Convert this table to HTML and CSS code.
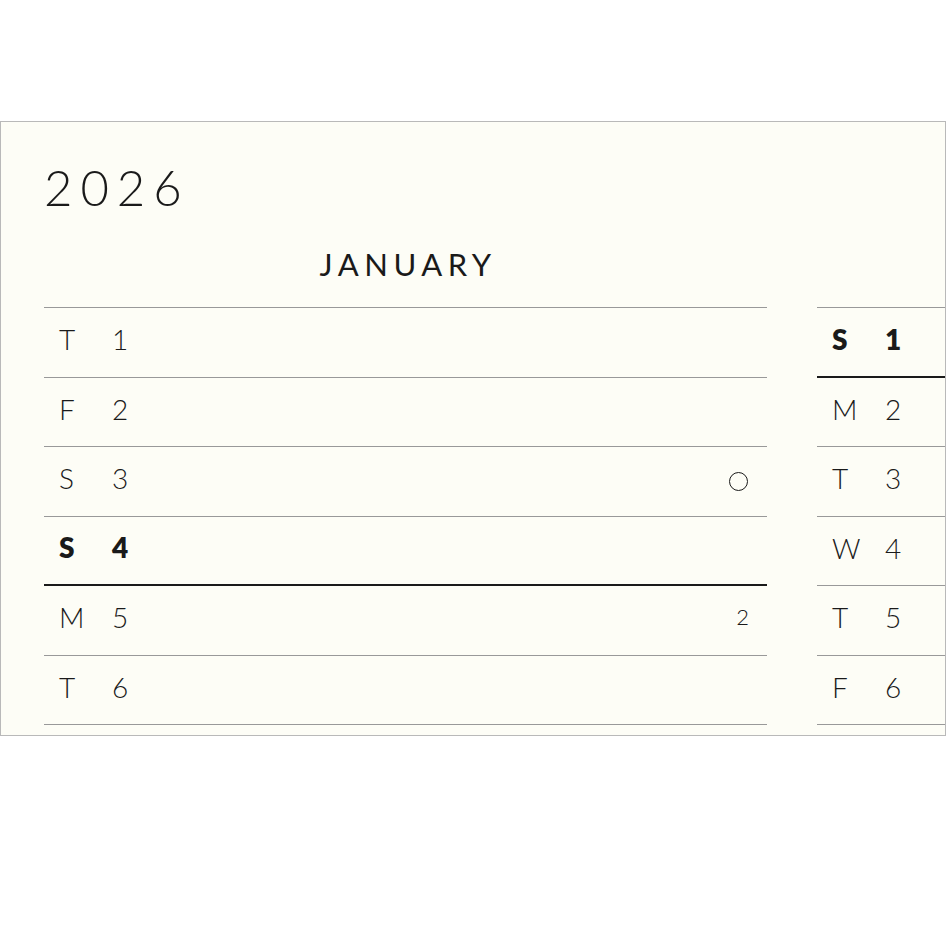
FILE: index.html
```html
<!DOCTYPE html>
<html lang="en">
<head>
<meta charset="utf-8">
<title>2026 Planner</title>
<link rel="stylesheet" href="styles.css">
</head>
<body>
<div class="card">
  <div class="year">2026</div>
  <div class="months">
    <section class="month month-main">
      <h2 class="month-name">JANUARY</h2>
      <ul class="days">
        <li class="day"><span class="dow">T</span><span class="num">1</span></li>
        <li class="day"><span class="dow">F</span><span class="num">2</span></li>
        <li class="day"><span class="dow">S</span><span class="num">3</span><span class="moon"></span></li>
        <li class="day day-sunday"><span class="dow">S</span><span class="num">4</span></li>
        <li class="day"><span class="dow">M</span><span class="num">5</span><span class="week">2</span></li>
        <li class="day"><span class="dow">T</span><span class="num">6</span></li>
      </ul>
    </section>
    <section class="month month-next">
      <h2 class="month-name month-name-empty">&nbsp;</h2>
      <ul class="days">
        <li class="day day-sunday"><span class="dow">S</span><span class="num">1</span></li>
        <li class="day"><span class="dow">M</span><span class="num">2</span></li>
        <li class="day"><span class="dow">T</span><span class="num">3</span></li>
        <li class="day"><span class="dow">W</span><span class="num">4</span></li>
        <li class="day"><span class="dow">T</span><span class="num">5</span></li>
        <li class="day"><span class="dow">F</span><span class="num">6</span></li>
      </ul>
    </section>
  </div>
</div>
</body>
</html>
```
FILE: styles.css
```css
html, body {
  margin: 0;
  padding: 0;
  background: #ffffff;
}

body {
  font-family: "Lato", "Liberation Sans", sans-serif;
  color: #1a1a1a;
}

.card {
  margin-top: 121px;
  width: 946px;
  box-sizing: border-box;
  background: #fdfdf6;
  border: 1px solid #b9b9b9;
  padding: 41px 0 10px 43px;
  overflow: hidden;
}

.year {
  font-size: 49px;
  font-weight: 300;
  line-height: 1;
  letter-spacing: 8px;
  height: 48px;
}

.months {
  display: flex;
  gap: 50px;
  margin-top: 38px;
}

.month-main {
  width: 723px;
  flex: none;
}

.month-next {
  flex: 1;
  min-width: 0;
}

.month-name {
  margin: 0;
  font-size: 31px;
  font-weight: 400;
  line-height: 1;
  letter-spacing: 5.5px;
  text-align: center;
  height: 31px;
  padding-left: 5px;
}

.days {
  list-style: none;
  margin: 27px 0 0;
  padding: 0;
  border-top: 1px solid #999999;
}

.day {
  display: flex;
  align-items: center;
  height: 69.5px;
  box-sizing: border-box;
  border-bottom: 1px solid #999999;
  padding-left: 15px;
  padding-bottom: 6px;
  font-size: 28px;
  font-weight: 300;
  line-height: 1;
}

.dow {
  width: 53px;
  flex: none;
}

.num {
  flex: none;
}

.day-sunday {
  font-weight: 800;
  border-bottom: 2px solid #1a1a1a;
}

.month-next .day {
  padding-left: 15px;
}

.moon {
  margin-left: auto;
  margin-right: 19px;
  margin-top: 6px;
  width: 17px;
  height: 17px;
  border: 1.5px solid #1a1a1a;
  border-radius: 50%;
}

.week {
  margin-left: auto;
  margin-right: 18px;
  font-size: 22px;
  font-weight: 300;
}
```
